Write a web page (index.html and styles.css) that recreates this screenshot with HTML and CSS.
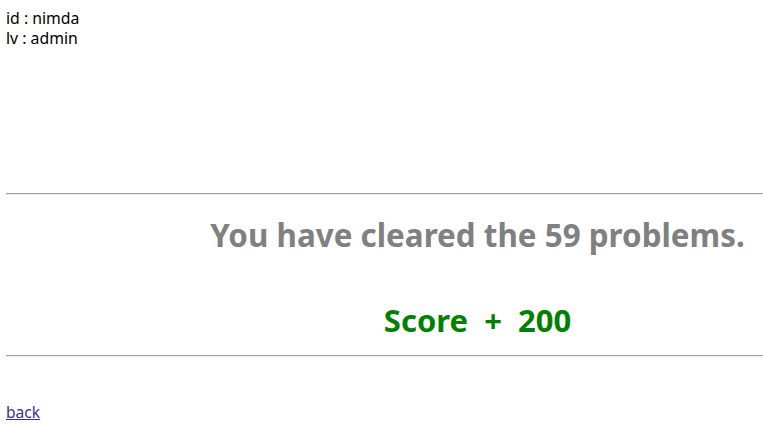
FILE: index.html
```html
<!DOCTYPE html>
<html>
<head>
<meta charset="utf-8">
<link rel="stylesheet" href="styles.css">
</head>
<body>
<div class="user">
  <div>id : nimda</div>
  <div>lv : admin</div>
</div>
<hr class="rule rule-top">
<div class="result">
  <div class="cleared">You have cleared the 59 problems.</div>
  <div class="score">Score&nbsp; +&nbsp; 200</div>
</div>
<hr class="rule">
<a class="back" href="#">back</a>
</body>
</html>
```

FILE: styles.css
```css
html, body {
  margin: 0;
  padding: 0;
  background: #fff;
}
body {
  padding: 8px 0 0 6px;
  font-family: "Noto Sans", "Noto Sans CJK KR", sans-serif;
  color: #000;
}
.user {
  font-size: 15.8px;
  line-height: 20px;
  height: 40px;
}
.rule {
  margin: 0;
  height: 0;
  border: 0;
  border-top: 1px solid #a0a0a0;
  border-bottom: 1px solid #eeeeee;
}
.rule-top {
  margin-top: 145px;
}
.result {
  padding-left: 186px;
  text-align: center;
  font-weight: bold;
  height: 160px;
  display: flex;
  flex-direction: column;
}
.cleared {
  color: #808080;
  font-size: 31.4px;
  line-height: 40px;
  margin-top: 20px;
}
.score {
  color: #008000;
  font-size: 31px;
  line-height: 40px;
  margin-top: 45px;
}
.back {
  display: inline-block;
  margin-top: 45px;
  font-size: 15.6px;
  line-height: 20px;
  color: #3b2e9c;
}
```
